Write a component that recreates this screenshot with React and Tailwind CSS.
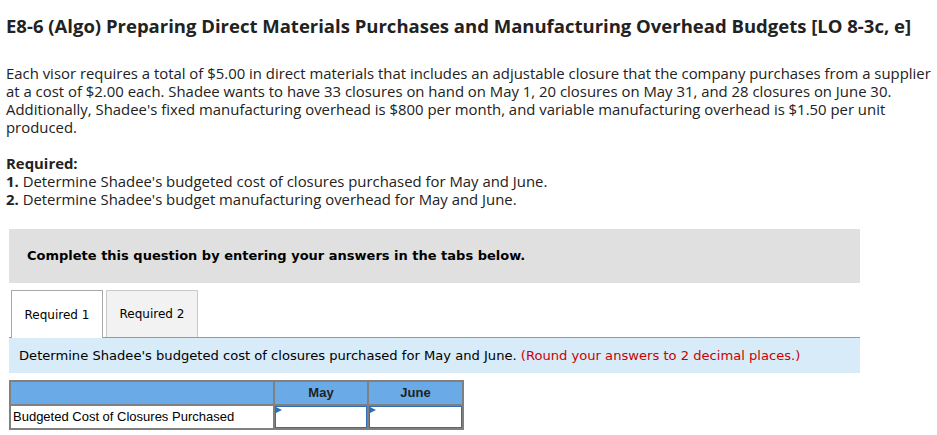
export default function App() {
  return (
    <div className="w-[937px] h-[435px] overflow-hidden bg-white text-[#222]">
      <div className="px-[6px] pt-[14px] font-['Open_Sans',sans-serif]">
        <h1 className="text-[18.5px] font-bold leading-[24px] whitespace-nowrap">
          E8-6 (Algo) Preparing Direct Materials Purchases and Manufacturing Overhead Budgets [LO 8-3c, e]
        </h1>
        <p className="mt-[26px] text-[14.9px] leading-[18px] whitespace-nowrap">
          Each visor requires a total of $5.00 in direct materials that includes an adjustable closure that the company purchases from a supplier
          <br />
          at a cost of $2.00 each. Shadee wants to have 33 closures on hand on May 1, 20 closures on May 31, and 28 closures on June 30.
          <br />
          Additionally, Shadee's fixed manufacturing overhead is $800 per month, and variable manufacturing overhead is $1.50 per unit
          <br />
          produced.
        </p>
        <div className="mt-[18px] text-[14.9px] leading-[18px]">
          <p className="font-bold">Required:</p>
          <p>
            <span className="font-bold">1.</span> Determine Shadee's budgeted cost of closures purchased for May and June.
          </p>
          <p>
            <span className="font-bold">2.</span> Determine Shadee's budget manufacturing overhead for May and June.
          </p>
        </div>
      </div>

      <div className="ml-[9px] w-[851px] mt-[21px] font-['DejaVu_Sans',Verdana,sans-serif]">
        <div className="h-[54px] bg-[#e0e0e0] flex items-center px-[18px] text-[13px] font-bold text-black">
          Complete this question by entering your answers in the tabs below.
        </div>

        <div className="mt-[7px] flex gap-[3px] pl-[2px] text-[12px] text-black">
          <div className="w-[92px] h-[48px] bg-white border border-[#a8a8a8] border-b-0 flex items-center justify-center relative z-10 -mb-px">
            Required 1
          </div>
          <div className="w-[92px] h-[47px] bg-[#f2f2f2] border border-[#c8c8c8] border-b-0 flex items-center justify-center">
            Required 2
          </div>
        </div>

        <div className="h-[36px] bg-[#d7ebf9] border-t border-[#999] flex items-center pl-[10px] text-[13.1px] text-black">
          Determine Shadee's budgeted cost of closures purchased for May and June.&nbsp;
          <span className="text-[#cc0000]">(Round your answers to 2 decimal places.)</span>
        </div>

        <table className="mt-[7px] border-collapse font-['Liberation_Sans',Arial,sans-serif] text-[13px]">
          <thead>
            <tr className="bg-[#6aaae6] h-[24px]">
              <th className="w-[264px] border-2 border-[#808080]"></th>
              <th className="w-[94px] border-2 border-[#808080] font-bold text-[#222]">May</th>
              <th className="w-[95px] border-2 border-[#808080] font-bold text-[#222]">June</th>
            </tr>
          </thead>
          <tbody>
            <tr className="h-[24px]">
              <td className="border-2 border-[#808080] px-[2px] text-black">Budgeted Cost of Closures Purchased</td>
              <td className="border-2 border-[#808080] p-0">
                <InputCell />
              </td>
              <td className="border-2 border-[#808080] p-0">
                <InputCell />
              </td>
            </tr>
          </tbody>
        </table>
      </div>
    </div>
  );
}

function InputCell() {
  return (
    <div className="relative h-[22px] border border-[#2f6db5] bg-white">
      <svg className="absolute left-0 top-0" width="6" height="6" viewBox="0 0 6 6">
        <polygon points="0,0 6,3 0,6" fill="#2f6db5" />
      </svg>
    </div>
  );
}
